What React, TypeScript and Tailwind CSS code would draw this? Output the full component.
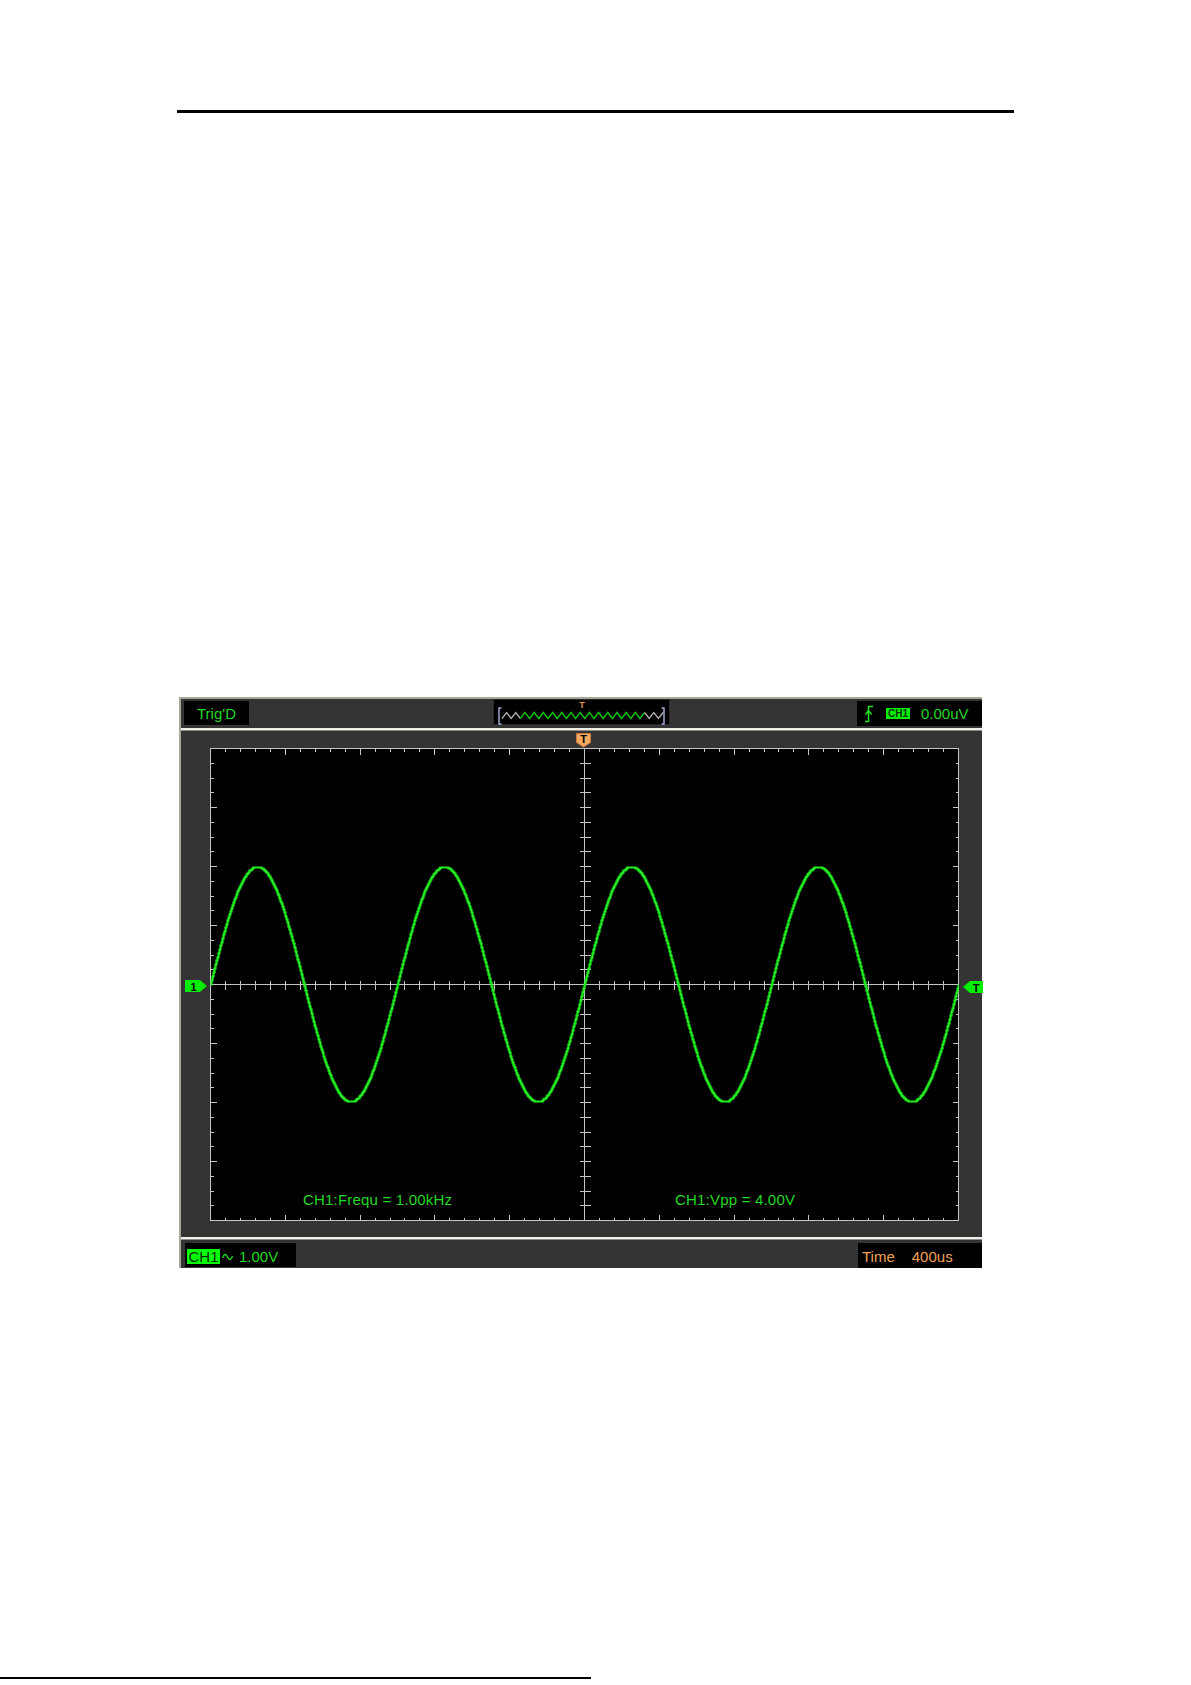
import React from 'react'

// graticule geometry, in px (10 x 8 divisions)
const GW = 748
const GH = 472
const XSTEP = GW / 50
const YSTEP = GH / 32

const GRID = '#c4c4c4'
const TRACE = '#22f022'
const LABEL = 'text-[#22d822]'

function tracePath() {
  // 1 kHz at 400us/div -> 2.5 div per period, 2 div amplitude
  let d = ''
  for (let x = 0; x <= GW; x++) {
    const y = Math.round(GH / 2 - 117.5 * Math.sin((2 * Math.PI * x) / (GW / 4))) + 0.5
    d += x === 0 ? `M0.5 ${y}` : ` H${x + 0.5} V${y}`
  }
  return d
}

function Graticule() {
  const xs = Array.from({ length: 49 }, (_, i) => i + 1)
  const ys = Array.from({ length: 31 }, (_, i) => i + 1)
  const cx = GW / 2 + 0.5
  const cy = GH / 2 + 0.5

  return (
    <svg width={GW + 1} height={GH + 1} viewBox={`0 0 ${GW + 1} ${GH + 1}`} className="block" shapeRendering="crispEdges">
      <rect x={0.5} y={0.5} width={GW} height={GH} fill="#000" stroke={GRID} strokeWidth={1} />
      <line x1={cx} y1={0} x2={cx} y2={GH + 1} stroke={GRID} />
      <line x1={0} y1={cy} x2={GW + 1} y2={cy} stroke={GRID} />
      {xs.map(i => {
        const x = Math.round(i * XSTEP) + 0.5
        const len = i % 5 === 0 ? 6 : 3
        return (
          <g key={`x${i}`} stroke={GRID}>
            <line x1={x} y1={0.5} x2={x} y2={0.5 + len} />
            <line x1={x} y1={GH + 0.5} x2={x} y2={GH + 0.5 - len} />
            <line x1={x} y1={cy - 4} x2={x} y2={cy + 5} />
          </g>
        )
      })}
      {ys.map(j => {
        const y = Math.round(j * YSTEP) + 0.5
        const len = j % 4 === 0 ? 6 : 3
        return (
          <g key={`y${j}`} stroke={GRID}>
            <line x1={0.5} y1={y} x2={0.5 + len} y2={y} />
            <line x1={GW + 0.5} y1={y} x2={GW + 0.5 - len} y2={y} />
            <line x1={cx - 5} y1={y} x2={cx + 6} y2={y} />
          </g>
        )
      })}
      <path d={tracePath()} fill="none" stroke={TRACE} strokeWidth={2.2} shapeRendering="auto" />
    </svg>
  )
}

// zigzag of the whole record; the part on screen is drawn green
const ZIG: [number, number][] = Array.from({ length: 36 }, (_, k) => [9 + k * 4.6, k % 2 === 0 ? 19.5 : 13.5])

function zigPoints(from: number, to: number) {
  return ZIG.slice(from, to + 1).map(([x, y]) => `${x.toFixed(1)},${y}`).join(' ')
}

function MiniWave() {
  // compressed view of the record with the trigger point on top
  return (
    <div className="ml-[244px] w-[177px] h-[26px] bg-black border border-[#262626] relative">
      <svg width={177} height={26} className="absolute -left-px -top-px">
        <polyline points={zigPoints(0, 4)} fill="none" stroke="#b4b4b4" strokeWidth={1.3} />
        <polyline points={zigPoints(4, 31)} fill="none" stroke="#10c010" strokeWidth={1.4} />
        <polyline points={zigPoints(31, 35)} fill="none" stroke="#b4b4b4" strokeWidth={1.3} />
        <path d="M8.5 9 H6 V25 H8.5" fill="none" stroke="#9aa6cc" strokeWidth={1.5} />
        <path d="M168.5 9 H171 V25 H168.5" fill="none" stroke="#9aa6cc" strokeWidth={1.5} />
        <text x={89} y={8.5} textAnchor="middle" fontSize={9} fontWeight={700} fill="#e8903c" fontFamily="Liberation Sans, Arial, sans-serif">T</text>
      </svg>
    </div>
  )
}

function Separator() {
  return <div className="h-[3px] border-t-2 border-[#eeeeea] bg-[#8e8c84]" />
}

function Scope() {
  return (
    <div className="mt-[584px] ml-[179px] w-[803px] bg-[#343434] border-t-2 border-l-2 border-[#a8a698] flex flex-col">
      <div className="flex items-start h-[29px]">
        <div className={`ml-[3px] mt-[2px] w-[65px] h-[24px] bg-black flex items-center pl-[13px] text-[15px] leading-[15px] ${LABEL}`}>
          Trig'D
        </div>
        <MiniWave />
        <div className="ml-auto mt-[2px] w-[125px] h-[25px] bg-black flex items-center">
          <svg width={8} height={18} className="ml-[8px]">
            <path d="M0 16.5 H3.5 V1.5 H8" fill="none" stroke="#1ee01e" strokeWidth={1.5} />
            <path d="M0.5 9.5 L3.5 5.5 L6.5 9.5" fill="none" stroke="#1ee01e" strokeWidth={1.5} />
          </svg>
          <span className="ml-[13px] w-[24px] h-[11px] bg-[#00f000] text-[10px] leading-[11px] font-bold text-center text-[#0a300a]">CH1</span>
          <span className={`ml-[11px] text-[15px] leading-[15px] ${LABEL}`}>0.00uV</span>
        </div>
      </div>

      <Separator />

      <div className="relative h-[506px] pl-[29px] pt-[17px]">
        <div className="relative w-[749px] h-[473px]">
          <Graticule />
          <span className={`absolute left-[93px] top-[444px] text-[15px] leading-[15px] tracking-[0.2px] ${LABEL}`}>
            CH1:Frequ = 1.00kHz
          </span>
          <span className={`absolute left-[465px] top-[444px] text-[15px] leading-[15px] tracking-[0.2px] ${LABEL}`}>
            CH1:Vpp = 4.00V
          </span>
        </div>

        {/* trigger position marker */}
        <svg width={15} height={15} className="absolute left-[395px] top-[2px]">
          <polygon points="0.5,0.5 14.5,0.5 14.5,9.5 7.5,14 0.5,9.5" fill="#f4a862" stroke="#c87a3a" />
          <text x={7.5} y={10} textAnchor="middle" fontSize={11} fontWeight={700} fill="#000" fontFamily="Liberation Sans, Arial, sans-serif">T</text>
        </svg>
        {/* channel 1 ground level */}
        <svg width={22} height={12} className="absolute left-[4px] top-[249px]">
          <polygon points="0,0 15,0 22,6 15,12 0,12" fill="#00ec00" />
          <text x={8.5} y={10.5} textAnchor="middle" fontSize={11} fontWeight={700} fill="#000" fontFamily="Liberation Sans, Arial, sans-serif">1</text>
        </svg>
        {/* trigger level */}
        <svg width={20} height={12} className="absolute left-[782px] top-[250px]">
          <polygon points="0,6 7,0 20,0 20,12 7,12" fill="#00ec00" />
          <text x={13} y={10.5} textAnchor="middle" fontSize={11} fontWeight={700} fill="#000" fontFamily="Liberation Sans, Arial, sans-serif">T</text>
        </svg>
      </div>

      <Separator />

      <div className="flex items-start h-[28px]">
        <div className={`ml-[4px] mt-[3px] w-[111px] h-[24px] bg-black flex items-start pt-[6px] text-[15px] leading-[15px] ${LABEL}`}>
          <span className="ml-[2px] w-[33px] h-[15px] bg-[#00ff00] text-[#0a2a0a] text-center">CH1</span>
          <svg width={11} height={8} className="ml-[2px] mt-[4px]">
            <path d="M0.5 5 C2 0.5, 4 0.5, 5.5 4 S9 7.5, 10.5 3" fill="none" stroke="#1ee01e" strokeWidth={1.3} />
          </svg>
          <span className="ml-[6px]">1.00V</span>
        </div>
        <div className="ml-auto mt-[3px] w-[124px] h-[25px] bg-black flex items-start pt-[6px] text-[15px] leading-[15px] text-[#f0a058]">
          <span className="ml-[4px]">Time</span>
          <span className="ml-[17px]">400us</span>
        </div>
      </div>
    </div>
  )
}

export default function App() {
  return (
    <div className="w-[1191px] h-[1685px] bg-white flex flex-col font-['Liberation_Sans',Arial,sans-serif]">
      <div className="mt-[110px] ml-[177px] w-[837px] h-[3px] bg-black" />
      <Scope />
      <div className="mt-[409px] w-[591px] h-[2px] bg-black" />
    </div>
  )
}
